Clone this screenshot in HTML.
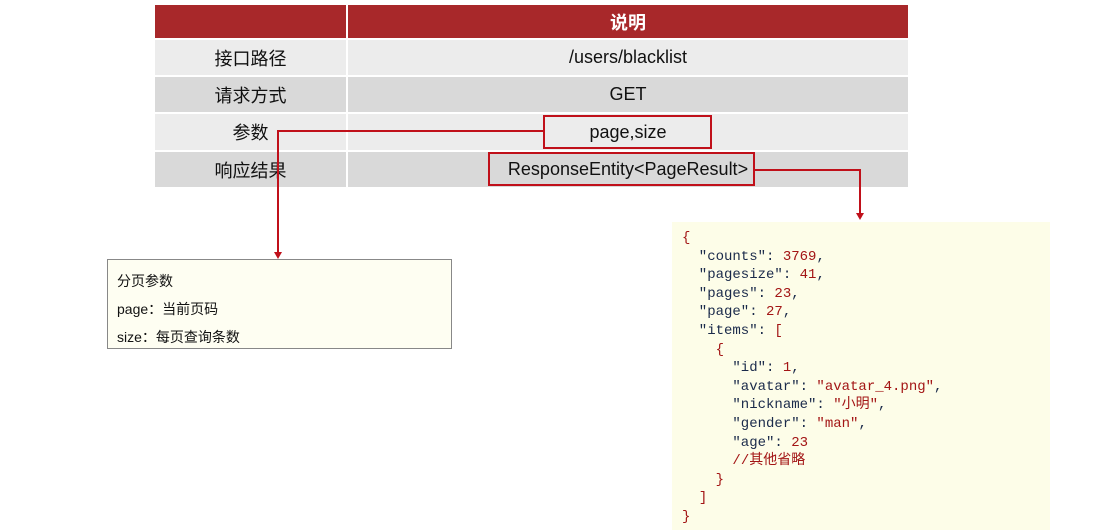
<!DOCTYPE html>
<html><head><meta charset="utf-8"><style>
body{margin:0;width:1098px;height:530px;background:#fff;position:relative;overflow:hidden;font-family:"Liberation Sans","Noto Sans CJK SC",sans-serif;}
.c{position:absolute;display:flex;align-items:center;justify-content:center;font-size:18px;color:#111;}
.hdr{background:#a8282a;color:#fff;font-weight:bold;}
.l{background:#ececec}.d{background:#d9d9d9}
.box{position:absolute;border:2px solid #c0101a;box-sizing:border-box;}
.ln{position:absolute;background:#c0101a;}
pre{margin:0;font-family:"Liberation Mono","Noto Sans CJK SC",monospace;font-size:14px;line-height:18.6px;color:#1a2a4a;}
.n{color:#a31515}.s{color:#a31515}
</style></head><body>
<div class="c hdr" style="left:155px;top:5px;width:191px;height:33px"></div>
<div class="c hdr" style="left:348px;top:5px;width:560px;height:33px">说明</div>
<div class="c l" style="left:155px;top:40px;width:191px;height:35px">接口路径</div>
<div class="c l" style="left:348px;top:40px;width:560px;height:35px">/users/blacklist</div>
<div class="c d" style="left:155px;top:77px;width:191px;height:35px">请求方式</div>
<div class="c d" style="left:348px;top:77px;width:560px;height:35px">GET</div>
<div class="c l" style="left:155px;top:114px;width:191px;height:36px">参数</div>
<div class="c l" style="left:348px;top:114px;width:560px;height:36px">page,size</div>
<div class="c d" style="left:155px;top:152px;width:191px;height:35px">响应结果</div>
<div class="c d" style="left:348px;top:152px;width:560px;height:35px">ResponseEntity&lt;PageResult&gt;</div>
<div class="box" style="left:543px;top:115px;width:169px;height:34px"></div>
<div class="box" style="left:488px;top:152px;width:267px;height:34px"></div>
<div class="ln" style="left:278px;top:130px;width:265px;height:2px"></div>
<div class="ln" style="left:277px;top:130px;width:2px;height:124px"></div>
<div style="position:absolute;left:274px;top:252px;border-left:4px solid transparent;border-right:4px solid transparent;border-top:7px solid #c0101a"></div>
<div class="ln" style="left:755px;top:169px;width:106px;height:2px"></div>
<div class="ln" style="left:859px;top:169px;width:2px;height:46px"></div>
<div style="position:absolute;left:856px;top:213px;border-left:4px solid transparent;border-right:4px solid transparent;border-top:7px solid #c0101a"></div>
<div style="position:absolute;left:107px;top:259px;width:345px;height:90px;box-sizing:border-box;border:1px solid #888;background:#fefef2;font-size:14px;color:#111;padding:7px 0 0 9px;line-height:28px">
<div>分页参数</div><div>page：当前页码</div><div>size：每页查询条数</div></div>
<div style="position:absolute;left:672px;top:222px;width:378px;height:308px;background:#fdfde8;padding:7px 0 0 10px;box-sizing:border-box">
<pre><span class="n">{</span>
  "counts": <span class="n">3769</span>,
  "pagesize": <span class="n">41</span>,
  "pages": <span class="n">23</span>,
  "page": <span class="n">27</span>,
  "items": <span class="n">[</span>
    <span class="n">{</span>
      "id": <span class="n">1</span>,
      "avatar": <span class="s">"avatar_4.png"</span>,
      "nickname": <span class="s">"小明"</span>,
      "gender": <span class="s">"man"</span>,
      "age": <span class="n">23</span>
      <span class="n">//其他省略</span>
    <span class="n">}</span>
  <span class="n">]</span>
<span class="n">}</span></pre></div>
</body></html>
